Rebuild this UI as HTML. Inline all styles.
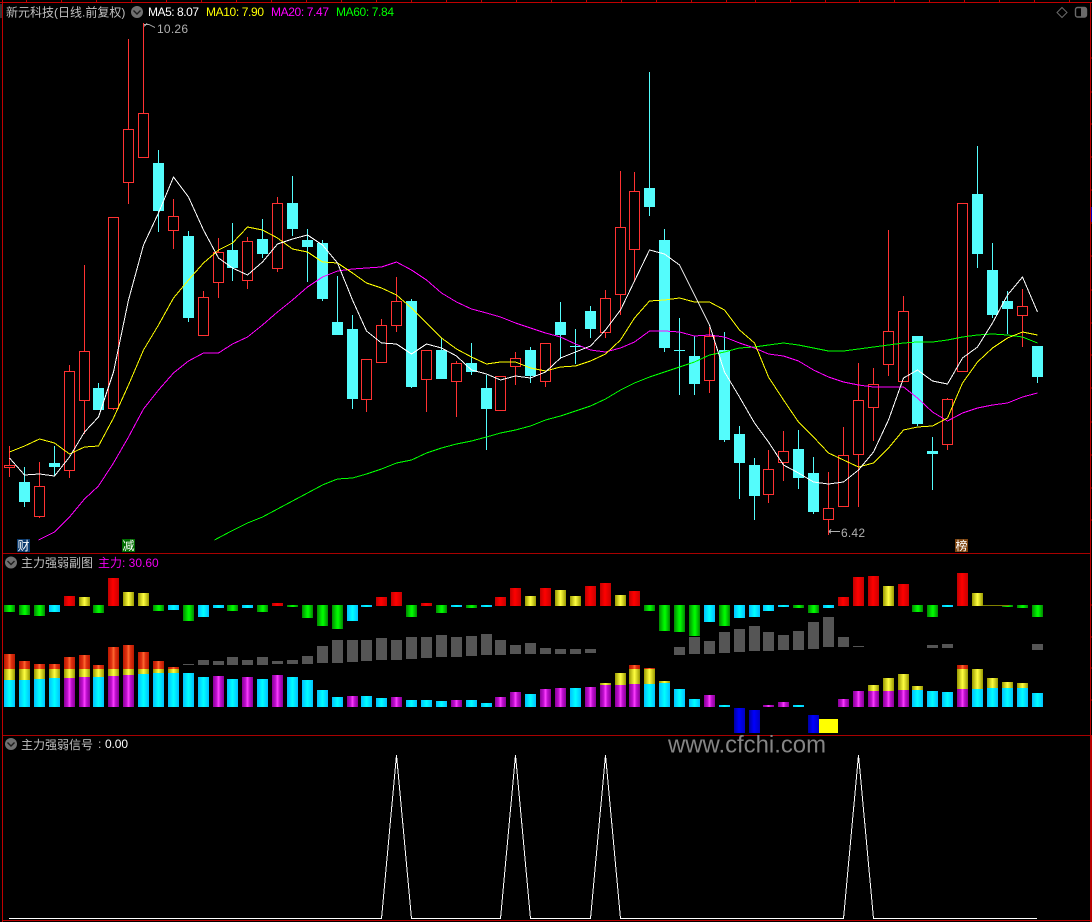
<!DOCTYPE html>
<html lang="zh">
<head>
<meta charset="utf-8">
<title>新元科技</title>
<style>
html,body{margin:0;padding:0;background:#000;width:1092px;height:922px;overflow:hidden}
svg{display:block;position:absolute;left:0;top:0;font-family:"Liberation Sans","WenQuanYi Zen Hei","Noto Sans CJK SC",sans-serif;font-size:12px}
#b rect{width:11px}
.g{fill:url(#gg)}.c{fill:url(#gc)}.r{fill:url(#gr)}.y{fill:url(#gy)}.p{fill:url(#gp)}.o{fill:url(#go)}.u{fill:url(#gu)}
</style>
</head>
<body>
<svg width="1092" height="922" viewBox="0 0 1092 922" xmlns="http://www.w3.org/2000/svg" shape-rendering="crispEdges">
<defs>
<linearGradient id="gg"><stop offset="0" stop-color="#008800"/><stop offset=".4" stop-color="#00e800"/><stop offset=".55" stop-color="#00ff00"/><stop offset="1" stop-color="#008800"/></linearGradient>
<linearGradient id="gc"><stop offset="0" stop-color="#00c0ff"/><stop offset=".5" stop-color="#00ffff"/><stop offset="1" stop-color="#00c0ff"/></linearGradient>
<linearGradient id="gr"><stop offset="0" stop-color="#c00000"/><stop offset=".45" stop-color="#ff0000"/><stop offset="1" stop-color="#c80000"/></linearGradient>
<linearGradient id="gy"><stop offset="0" stop-color="#989800"/><stop offset=".5" stop-color="#ffff40"/><stop offset="1" stop-color="#989800"/></linearGradient>
<linearGradient id="gp"><stop offset="0" stop-color="#8a0098"/><stop offset=".33" stop-color="#c010d0"/><stop offset=".5" stop-color="#ff40ff"/><stop offset=".67" stop-color="#c010d0"/><stop offset="1" stop-color="#8a0098"/></linearGradient>
<linearGradient id="go"><stop offset="0" stop-color="#b81800"/><stop offset=".33" stop-color="#e03010"/><stop offset=".5" stop-color="#ff6a30"/><stop offset=".67" stop-color="#e03010"/><stop offset="1" stop-color="#b81800"/></linearGradient>
<linearGradient id="gu"><stop offset="0" stop-color="#0000a0"/><stop offset=".45" stop-color="#0000ff"/><stop offset="1" stop-color="#0000c0"/></linearGradient>
</defs>

<!-- frame -->
<g fill="none" stroke="#c00000" stroke-width="1">
<path d="M2.5 0V922"/>
<path d="M0 2.5H1092" />
<path d="M3 553.5H1090" stroke="#a80000"/>
<path d="M3 735.5H1090" stroke="#a80000"/>
<path d="M3 920.5H1092" stroke="#b80000"/>
<path d="M1090.5 2V735"/>
<path d="M1091 735V922" stroke-width="2" stroke="#b80000"/>
<path d="M26.5 0V2M61.5 0V2M96.5 0V2M131.5 0V2M166.5 0V2M201.5 0V2M236.5 0V2M271.5 0V2M306.5 0V2M341.5 0V2M376.5 0V2M411.5 0V2M446.5 0V2M481.5 0V2M516.5 0V2M551.5 0V2M586.5 0V2M621.5 0V2M656.5 0V2M691.5 0V2M726.5 0V2M755.5 0V2M790.5 0V2M825.5 0V2M859.5 0V2M894.5 0V2M929.5 0V2M964.5 0V2M999.5 0V2M1034.5 0V2M1069.5 0V2"/>
<path d="M1091 58h1M1091 92h1M1091 124h1M1091 157h1M1091 190h1M1091 223h1M1091 256h1M1091 290h1M1091 323h1M1091 355h1M1091 388h1M1091 422h1M1091 455h1M1091 488h1M1091 520h1M1091 605h1M1091 637h1M1091 668h1M1091 700h1"/>
</g>
<path d="M1091 207h1v15h-1z" fill="#0000c0"/>
<path d="M0 4h2v14h-2z" fill="#333"/>

<!-- candle wicks and bodies: cyan -->
<path fill="none" stroke="#54fcfc" d="M24.5 467V507M54.5 446V476M98.5 383V388M158.5 150V232M188.5 231V322M232.5 223V281M262.5 219V258M292.5 176V236M307.5 229V282M322.5 240V301M337.5 276V322M352.5 315V409M411.5 299V388M441.5 338V350M471.5 343V375M486.5 375V450M530.5 347V383M560.5 302V359M575.5 329V364M590.5 306V338M649.5 72V216M664.5 229V352M679.5 318V395M694.5 336V395M724.5 332V442M739.5 426V499M754.5 458V520M798.5 430V489M813.5 457V514M917.5 336V426M932.5 437V490M977.5 146V268M992.5 243V318M1007.5 291V334M1037.5 346V383"/>
<path fill="#54fcfc" d="M19 482h11v20h-11zM49 463h11v4h-11zM93 388h11v22h-11zM153 163h11v48h-11zM183 236h11v82h-11zM227 250h11v18h-11zM257 239h11v15h-11zM287 203h11v26h-11zM302 240h11v7h-11zM317 243h11v56h-11zM332 322h11v13h-11zM347 329h11v70h-11zM406 301h11v86h-11zM436 350h11v29h-11zM466 363h11v9h-11zM481 388h11v21h-11zM525 350h11v26h-11zM555 322h11v13h-11zM570 346h11v1h-11zM585 311h11v18h-11zM644 188h11v19h-11zM659 240h11v108h-11zM674 350h11v1h-11zM689 356h11v28h-11zM719 350h11v90h-11zM734 434h11v29h-11zM749 465h11v31h-11zM793 449h11v29h-11zM808 473h11v39h-11zM912 336h11v88h-11zM927 451h11v3h-11zM972 194h11v60h-11zM987 270h11v45h-11zM1002 301h11v8h-11zM1032 346h11v31h-11z"/>

<!-- candles: red hollow -->
<path fill="none" stroke="#ff3232" d="M9.5 446V465M4.5 465.5h10v2h-10zM9.5 468V477
M39.5 462V486M34.5 486.5h10v30h-10zM39.5 517V518
M69.5 365V371M64.5 371.5h10v99h-10zM69.5 471V478
M84.5 265V351M79.5 351.5h10v49h-10zM84.5 401V434
M108.5 217.5h10v191h-10zM113.5 409V410
M128.5 39V129M123.5 129.5h10v53h-10zM128.5 183V204
M143.5 23V113M138.5 113.5h10v44h-10z
M173.5 199V216M168.5 216.5h10v14h-10zM173.5 231V249
M203.5 291V297M198.5 297.5h10v38h-10z
M218.5 238V252M213.5 252.5h10v30h-10zM218.5 283V298
M247.5 237V241M242.5 241.5h10v39h-10zM247.5 281V289
M277.5 197V203M272.5 203.5h10v65h-10zM277.5 269V272
M361.5 359.5h10v40h-10zM366.5 400V412
M381.5 319V325M376.5 325.5h10v37h-10z
M396.5 277V301M391.5 301.5h10v24h-10zM396.5 326V332
M421.5 350.5h10v29h-10zM426.5 380V412
M456.5 361V363M451.5 363.5h10v18h-10zM456.5 382V417
M495.5 376.5h10v34h-10z
M515.5 352V358M510.5 358.5h10v8h-10zM515.5 367V385
M540.5 343.5h10v38h-10zM545.5 382V387
M605.5 290V298M600.5 298.5h10v34h-10zM605.5 333V338
M620.5 171V227M615.5 227.5h10v67h-10zM620.5 295V315
M634.5 172V191M629.5 191.5h10v58h-10zM634.5 250V282
M709.5 327V336M704.5 336.5h10v44h-10zM709.5 381V393
M768.5 450V469M763.5 469.5h10v25h-10zM768.5 495V503
M783.5 431V451M778.5 451.5h10v11h-10zM783.5 463V481
M828.5 472V508M823.5 508.5h10v11h-10zM828.5 520V535
M843.5 427V455M838.5 455.5h10v51h-10z
M858.5 363V400M853.5 400.5h10v54h-10zM858.5 455V507
M873.5 368V384M868.5 384.5h10v23h-10zM873.5 408V441
M888.5 230V331M883.5 331.5h10v33h-10zM888.5 365V376
M903.5 296V311M898.5 311.5h10v70h-10z
M947.5 398V399M942.5 399.5h10v45h-10zM947.5 445V450
M957.5 203.5h10v168h-10z
M1022.5 289V306M1017.5 306.5h10v9h-10zM1022.5 316V347"/>

<!-- MA lines -->
<g fill="none" stroke-width="1">
<polyline stroke="#00ff00" points="214.5,540 229.5,532 247.5,523 262.5,517 277.5,509 292.5,501 307.5,493 322.5,485 337.5,479 352.5,478 366.5,474 381.5,469 396.5,463 411.5,460 426.5,453 441.5,448 456.5,444 471.5,441 486.5,437 500.5,433 515.5,430 530.5,426 545.5,420 560.5,416 575.5,411 590.5,406 605.5,399 620.5,390 634.5,383 649.5,377 664.5,372 679.5,367 694.5,362 709.5,355 724.5,352 739.5,348 754.5,347 768.5,345 783.5,343 798.5,345 813.5,348 828.5,351 843.5,351 858.5,349 873.5,347 888.5,345 903.5,343 917.5,342 932.5,342 947.5,340 962.5,337 977.5,335 992.5,334 1007.5,335 1022.5,337 1037.5,343"/>
<polyline stroke="#ff00ff" points="38.5,540 54.5,532 69.5,517 84.5,499 98.5,486 113.5,463 128.5,437 143.5,409 158.5,390 173.5,373 188.5,361 203.5,353 218.5,353 232.5,344 247.5,337 262.5,325 277.5,312 292.5,300 307.5,287 322.5,277 337.5,271 352.5,269 366.5,268 381.5,267 396.5,262 411.5,270 426.5,280 441.5,293 456.5,302 471.5,309 486.5,313 500.5,317 515.5,323 530.5,328 545.5,333 560.5,337 575.5,344 590.5,350 605.5,352 620.5,348 634.5,342 649.5,331 664.5,331 679.5,332 694.5,336 709.5,335 724.5,337 739.5,343 754.5,348 768.5,354 783.5,356 798.5,361 813.5,370 828.5,377 843.5,382 858.5,385 873.5,387 888.5,387 903.5,387 917.5,398 932.5,412 947.5,421 962.5,413 977.5,408 992.5,405 1007.5,403 1022.5,397 1037.5,393"/>
<polyline stroke="#ffff00" points="9.5,452 24.5,446 39.5,439 54.5,443 69.5,454 84.5,447 98.5,446 113.5,418 128.5,385 143.5,350 158.5,325 173.5,298 188.5,280 203.5,263 218.5,250 232.5,243 247.5,227 262.5,230 277.5,238 292.5,249 307.5,252 322.5,262 337.5,263 352.5,273 366.5,283 381.5,288 396.5,295 411.5,308 426.5,323 441.5,338 456.5,349 471.5,357 486.5,364 500.5,362 515.5,362 530.5,368 545.5,371 560.5,367 575.5,366 590.5,361 605.5,354 620.5,340 634.5,318 649.5,301 664.5,300 679.5,298 694.5,302 709.5,302 724.5,310 739.5,330 754.5,343 768.5,377 783.5,400 798.5,422 813.5,437 828.5,453 843.5,460 858.5,467 873.5,463 888.5,448 903.5,430 917.5,427 932.5,426 947.5,418 962.5,383 977.5,362 992.5,348 1007.5,338 1022.5,332 1037.5,335"/>
<polyline stroke="#ffffff" points="9.5,458 24.5,475 39.5,474 54.5,476 69.5,457 84.5,432 98.5,417 113.5,372 128.5,300 143.5,245 158.5,213 173.5,177 188.5,197 203.5,230 218.5,258 232.5,268 247.5,275 262.5,262 277.5,244 292.5,239 307.5,235 322.5,245 337.5,263 352.5,300 366.5,331 381.5,343 396.5,344 411.5,354 426.5,344 441.5,348 456.5,356 471.5,370 486.5,374 500.5,380 515.5,376 530.5,378 545.5,372 560.5,358 575.5,352 590.5,346 605.5,330 620.5,310 634.5,281 649.5,250 664.5,254 679.5,265 694.5,295 709.5,325 724.5,372 739.5,397 754.5,423 768.5,442 783.5,465 798.5,473 813.5,482 828.5,484 843.5,482 858.5,470 873.5,452 888.5,420 903.5,378 917.5,370 932.5,381 947.5,384 962.5,358 977.5,347 992.5,323 1007.5,295 1022.5,277 1037.5,312"/>
</g>

<!-- high/low annotations -->
<path fill="none" stroke="#b0b0b0" d="M144 26.5L147 23.5M144 24.5H149L155 27.5"/>
<path fill="none" stroke="#b0b0b0" d="M829 531.5H840M829 531.5L831 529.5M829 531.5L831 533.5"/>
<text x="157" y="33" fill="#b0b0b0" textLength="31">10.26</text>
<text x="841" y="537" fill="#b0b0b0" textLength="24">6.42</text>

<!-- panel 1 header -->
<text x="6" y="16.5" fill="#c0c0c0">新元科技(日线.前复权)</text>
<circle cx="137" cy="12" r="6" fill="#707070" shape-rendering="auto"/>
<path d="M133.5 10.5L137 14L140.5 10.5" fill="none" stroke="#1c1c1c" stroke-width="1.4" shape-rendering="auto"/>
<text x="148" y="16" fill="#ffffff" textLength="51">MA5: 8.07</text>
<text x="206" y="16" fill="#ffff00" textLength="58">MA10: 7.90</text>
<text x="271" y="16" fill="#ff00ff" textLength="58">MA20: 7.47</text>
<text x="336" y="16" fill="#00ff00" textLength="58">MA60: 7.84</text>
<path d="M1062 7.5L1067 12.5L1062 17.5L1057 12.5Z" fill="none" stroke="#6a6a6a" shape-rendering="auto"/>
<rect x="1075.5" y="7.5" width="11" height="9.5" rx="2" fill="none" stroke="#6a6a6a" stroke-width="1.4" shape-rendering="auto"/>
<rect x="1081" y="8" width="5" height="8.5" fill="#6a6a6a"/>

<!-- event tags -->
<rect x="17" y="539" width="13" height="13" fill="#0c3a6c"/>
<text x="17.5" y="550" fill="#fff">财</text>
<rect x="122" y="539" width="13" height="13" fill="#006c00"/>
<text x="122.5" y="550" fill="#fff">减</text>
<rect x="955" y="539" width="13" height="13" fill="#7c4410"/>
<text x="955.5" y="550" fill="#fff">榜</text>

<!-- panel 2 header -->
<circle cx="11" cy="562.5" r="6" fill="#707070" shape-rendering="auto"/>
<path d="M7.5 561L11 564.5L14.5 561" fill="none" stroke="#1c1c1c" stroke-width="1.4" shape-rendering="auto"/>
<text x="21" y="567" fill="#c0c0c0">主力强弱副图</text>
<text x="98" y="567" fill="#f000f0">主力: 30.60</text>

<!-- indicator bars -->
<g id="b">
<!-- upper histogram -->
<rect class="g" x="4" y="605" height="7"/><rect class="g" x="19" y="605" height="10"/><rect class="g" x="34" y="605" height="11"/><rect class="c" x="49" y="605" height="7"/><rect class="r" x="64" y="596" height="10"/><rect class="y" x="79" y="597" height="9"/><rect class="g" x="93" y="605" height="8"/><rect class="r" x="108" y="578" height="28"/><rect class="y" x="123" y="592" height="14"/><rect class="y" x="138" y="593" height="13"/><rect class="g" x="153" y="605" height="6"/><rect class="c" x="168" y="605" height="5"/><rect class="g" x="183" y="605" height="16"/><rect class="c" x="198" y="605" height="12"/><rect class="c" x="213" y="605" height="3"/><rect class="g" x="227" y="605" height="6"/><rect class="c" x="242" y="605" height="3"/><rect class="g" x="257" y="605" height="7"/><rect class="r" x="272" y="603" height="3"/><rect class="g" x="287" y="605" height="2"/><rect class="g" x="302" y="605" height="13"/><rect class="g" x="317" y="605" height="21"/><rect class="g" x="332" y="605" height="24"/><rect class="c" x="347" y="605" height="16"/><rect class="c" x="361" y="605" height="2"/><rect class="r" x="376" y="597" height="9"/><rect class="r" x="391" y="592" height="14"/><rect class="g" x="406" y="605" height="12"/><rect class="r" x="421" y="603" height="3"/><rect class="g" x="436" y="605" height="8"/><rect class="c" x="451" y="605" height="2"/><rect class="g" x="466" y="605" height="3"/><rect class="c" x="481" y="605" height="2"/><rect class="r" x="495" y="597" height="9"/><rect class="r" x="510" y="588" height="18"/><rect class="y" x="525" y="596" height="10"/><rect class="r" x="540" y="588" height="18"/><rect class="y" x="555" y="590" height="16"/><rect class="y" x="570" y="596" height="10"/><rect class="r" x="585" y="586" height="20"/><rect class="r" x="600" y="583" height="23"/><rect class="y" x="615" y="595" height="11"/><rect class="r" x="629" y="591" height="15"/><rect class="g" x="644" y="605" height="6"/><rect class="g" x="659" y="605" height="26"/><rect class="g" x="674" y="605" height="27"/><rect class="g" x="689" y="605" height="31"/><rect class="c" x="704" y="605" height="17"/><rect class="g" x="719" y="605" height="21"/><rect class="c" x="734" y="605" height="13"/><rect class="c" x="749" y="605" height="12"/><rect class="c" x="763" y="605" height="6"/><rect class="c" x="778" y="605" height="2"/><rect class="g" x="793" y="605" height="3"/><rect class="g" x="808" y="605" height="8"/><rect class="c" x="823" y="605" height="3"/><rect class="r" x="838" y="597" height="9"/><rect class="r" x="853" y="577" height="29"/><rect class="r" x="868" y="576" height="30"/><rect class="y" x="883" y="586" height="20"/><rect class="r" x="898" y="584" height="22"/><rect class="g" x="912" y="605" height="7"/><rect class="g" x="927" y="605" height="12"/><rect class="c" x="942" y="605" height="2"/><rect class="r" x="957" y="573" height="33"/><rect class="y" x="972" y="593" height="13"/><rect class="g" x="1002" y="605" height="2"/><rect class="g" x="1017" y="605" height="3"/><rect class="g" x="1032" y="605" height="12"/>
<!-- lower stacks: red -->
<rect class="o" x="4" y="654" height="15"/><rect class="o" x="19" y="661" height="8"/><rect class="o" x="34" y="664" height="5"/><rect class="o" x="49" y="664" height="5"/><rect class="o" x="64" y="657" height="12"/><rect class="o" x="79" y="655" height="14"/><rect class="o" x="93" y="665" height="4"/><rect class="o" x="108" y="647" height="22"/><rect class="o" x="123" y="645" height="24"/><rect class="o" x="138" y="652" height="17"/><rect class="o" x="153" y="661" height="8"/><rect class="o" x="168" y="667" height="2"/><rect class="o" x="629" y="665" height="4"/><rect class="o" x="644" y="668" height="1"/><rect class="o" x="957" y="665" height="4"/>
<!-- lower stacks: yellow -->
<rect class="y" x="4" y="669" height="11"/><rect class="y" x="19" y="669" height="11"/><rect class="y" x="34" y="669" height="10"/><rect class="y" x="49" y="669" height="9"/><rect class="y" x="64" y="669" height="9"/><rect class="y" x="79" y="669" height="8"/><rect class="y" x="93" y="669" height="8"/><rect class="y" x="108" y="669" height="7"/><rect class="y" x="123" y="669" height="6"/><rect class="y" x="138" y="669" height="5"/><rect class="y" x="153" y="669" height="4"/><rect class="y" x="168" y="669" height="4"/><rect class="y" x="600" y="683" height="2"/><rect class="y" x="615" y="673" height="12"/><rect class="y" x="629" y="669" height="15"/><rect class="y" x="644" y="669" height="15"/><rect class="y" x="659" y="681" height="2"/><rect class="y" x="868" y="685" height="6"/><rect class="y" x="883" y="678" height="13"/><rect class="y" x="898" y="674" height="16"/><rect class="y" x="912" y="686" height="4"/><rect class="y" x="957" y="669" height="20"/><rect class="y" x="972" y="669" height="20"/><rect class="y" x="987" y="678" height="10"/><rect class="y" x="1002" y="682" height="6"/><rect class="y" x="1017" y="683" height="5"/>
<!-- lower stacks: base -->
<rect class="c" x="4" y="680" height="27"/><rect class="c" x="19" y="680" height="27"/><rect class="c" x="34" y="679" height="28"/><rect class="c" x="49" y="678" height="29"/><rect class="p" x="64" y="678" height="29"/><rect class="p" x="79" y="677" height="30"/><rect class="c" x="93" y="677" height="30"/><rect class="p" x="108" y="676" height="31"/><rect class="p" x="123" y="675" height="32"/><rect class="c" x="138" y="674" height="33"/><rect class="c" x="153" y="673" height="34"/><rect class="c" x="168" y="673" height="34"/><rect class="c" x="183" y="673" height="34"/><rect class="c" x="198" y="677" height="30"/><rect class="p" x="213" y="676" height="31"/><rect class="c" x="227" y="679" height="28"/><rect class="p" x="242" y="677" height="30"/><rect class="c" x="257" y="679" height="28"/><rect class="p" x="272" y="675" height="32"/><rect class="c" x="287" y="677" height="30"/><rect class="c" x="302" y="680" height="27"/><rect class="c" x="317" y="690" height="17"/><rect class="c" x="332" y="697" height="10"/><rect class="p" x="347" y="696" height="11"/><rect class="c" x="361" y="696" height="11"/><rect class="c" x="376" y="698" height="9"/><rect class="p" x="391" y="697" height="10"/><rect class="c" x="406" y="700" height="7"/><rect class="c" x="421" y="700" height="7"/><rect class="c" x="436" y="701" height="6"/><rect class="p" x="451" y="700" height="7"/><rect class="c" x="466" y="700" height="7"/><rect class="c" x="481" y="703" height="4"/><rect class="p" x="495" y="697" height="10"/><rect class="p" x="510" y="692" height="15"/><rect class="c" x="525" y="694" height="13"/><rect class="p" x="540" y="689" height="18"/><rect class="p" x="555" y="688" height="19"/><rect class="c" x="570" y="688" height="19"/><rect class="p" x="585" y="687" height="20"/><rect class="p" x="600" y="685" height="22"/><rect class="p" x="615" y="685" height="22"/><rect class="p" x="629" y="684" height="23"/><rect class="c" x="644" y="684" height="23"/><rect class="c" x="659" y="683" height="24"/><rect class="c" x="674" y="689" height="18"/><rect class="c" x="689" y="699" height="8"/><rect class="p" x="704" y="695" height="12"/><rect class="c" x="719" y="705" height="2"/><rect class="p" x="763" y="705" height="2"/><rect class="p" x="778" y="702" height="5"/><rect class="c" x="793" y="705" height="2"/><rect class="p" x="838" y="699" height="8"/><rect class="p" x="853" y="691" height="16"/><rect class="p" x="868" y="691" height="16"/><rect class="p" x="883" y="691" height="16"/><rect class="p" x="898" y="690" height="17"/><rect class="c" x="912" y="690" height="17"/><rect class="c" x="927" y="691" height="16"/><rect class="c" x="942" y="692" height="15"/><rect class="p" x="957" y="689" height="18"/><rect class="c" x="972" y="689" height="18"/><rect class="c" x="987" y="688" height="19"/><rect class="c" x="1002" y="688" height="19"/><rect class="c" x="1017" y="688" height="19"/><rect class="c" x="1032" y="693" height="14"/>
<!-- blue -->
<rect class="u" x="734" y="708" height="25"/><rect class="u" x="749" y="710" height="23"/><rect class="u" x="808" y="715" height="18"/>
</g>
<path fill="#808000" d="M983 605h26v1h-26z"/>
<path fill="#ffff00" d="M819 719h19v14h-19z"/>
<!-- gray bars -->
<path fill="#555555" d="M183 664h11v1h-11zM198 660h11v5h-11zM213 661h11v4h-11zM227 657h11v8h-11zM242 660h11v5h-11zM257 657h11v8h-11zM272 661h11v3h-11zM287 660h11v4h-11zM302 656h11v8h-11zM317 646h11v17h-11zM332 640h11v23h-11zM347 640h11v22h-11zM361 640h11v21h-11zM376 638h11v22h-11zM391 640h11v20h-11zM406 637h11v22h-11zM421 637h11v21h-11zM436 635h11v22h-11zM451 637h11v20h-11zM466 636h11v20h-11zM481 634h11v21h-11zM495 640h11v15h-11zM510 645h11v9h-11zM525 643h11v11h-11zM540 648h11v6h-11zM555 649h11v5h-11zM570 649h11v5h-11zM585 649h11v4h-11zM674 647h11v8h-11zM689 637h11v17h-11zM704 641h11v13h-11zM719 632h11v21h-11zM734 629h11v23h-11zM749 626h11v25h-11zM763 632h11v19h-11zM778 635h11v15h-11zM793 631h11v19h-11zM808 622h11v27h-11zM823 617h11v30h-11zM838 637h11v10h-11zM853 646h11v1h-11zM927 645h11v3h-11zM942 644h11v4h-11zM1032 644h11v6h-11z"/>

<!-- panel 3 header -->
<circle cx="11" cy="744" r="6" fill="#707070" shape-rendering="auto"/>
<path d="M7.5 742.5L11 746L14.5 742.5" fill="none" stroke="#1c1c1c" stroke-width="1.4" shape-rendering="auto"/>
<text x="21" y="749" fill="#c0c0c0">主力强弱信号</text>
<text x="98" y="748" fill="#c0c0c0">:</text>
<text x="105" y="748" fill="#ffffff" textLength="23">0.00</text>

<!-- signal line -->
<polyline fill="none" stroke="#ffffff" points="9,918.5 381.5,918.5 396.5,755 411.5,918.5 500.5,918.5 515.5,755 530.5,918.5 590.5,918.5 605.5,755 620.5,918.5 843.5,918.5 858.5,755 873.5,918.5 1037,918.5"/>

<!-- watermark -->
<text x="668" y="752.5" fill="#858585" textLength="158" lengthAdjust="spacingAndGlyphs" style="font-size:24px">www.cfchi.com</text>
</svg>
</body>
</html>
